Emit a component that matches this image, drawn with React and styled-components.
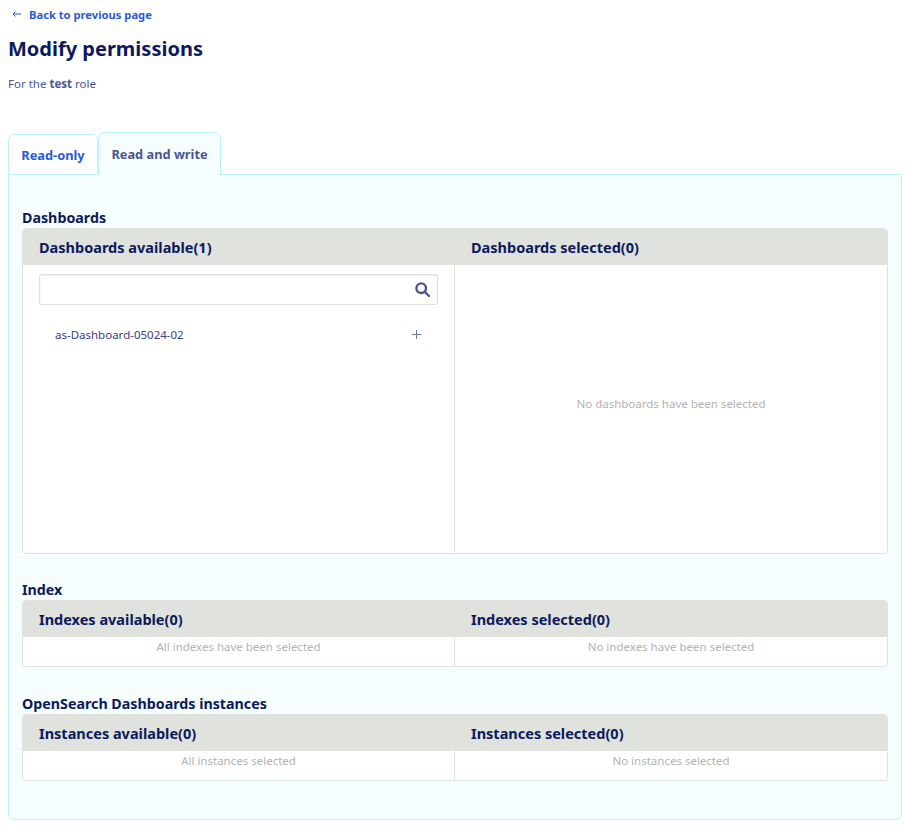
import React from 'react';
import styled, { createGlobalStyle } from 'styled-components';

const GlobalStyle = createGlobalStyle`
  html, body { margin: 0; padding: 0; background: #fff; }
  body { font-family: 'Noto Sans', 'Open Sans', sans-serif; color: #4d5592; }
`;

const Page = styled.div`
  width: 911px;
  height: 828px;
  box-sizing: border-box;
  padding: 6px 9px 0 8px;
  overflow: hidden;
`;

const BackLink = styled.a`
  display: flex;
  align-items: center;
  gap: 7px;
  height: 16px;
  padding-left: 4px;
  font-size: 11.2px;
  font-weight: 700;
  color: #2a5bd7;
  svg { width: 10px; height: 10px; }
`;

const Title = styled.h1`
  margin: 11px 0 0;
  height: 32px;
  line-height: 32px;
  font-size: 20px;
  font-weight: 700;
  color: #0c1a5c;
`;

const Subtitle = styled.p`
  margin: 10px 0 0;
  height: 18px;
  line-height: 18px;
  font-size: 11.5px;
  color: #4d5592;
  b { font-weight: 700; }
`;

const TabBar = styled.div`
  display: flex;
  align-items: flex-end;
  margin-top: 39px;
  height: 43px;
  margin-bottom: -1px;
  position: relative;
`;

const Tab = styled.div`
  display: flex;
  align-items: center;
  justify-content: center;
  box-sizing: border-box;
  width: ${p => p.$width}px;
  height: ${p => (p.$active ? 43 : 41)}px;
  padding-bottom: ${p => (p.$active ? 1 : 0)}px;
  font-size: 12.8px;
  font-weight: 700;
  color: ${p => (p.$active ? '#4d5592' : '#2a5bd7')};
  background: ${p => (p.$active ? '#f5fdff' : '#fff')};
  border: 1px solid #bef1ff;
  border-bottom: ${p => (p.$active ? '0' : '1px solid #bef1ff')};
  border-radius: 6px 6px 0 0;
`;

const Panel = styled.div`
  box-sizing: border-box;
  height: 646px;
  padding: 33px 13px 0;
  background: #f5fdff;
  border: 1px solid #bef1ff;
  border-radius: 0 0 6px 6px;
`;

const Section = styled.section`
  margin-bottom: ${p => p.$gap}px;
`;

const SectionTitle = styled.h2`
  margin: 0;
  height: 20px;
  line-height: 20px;
  font-size: 14.25px;
  font-weight: 700;
  color: #0c1a5c;
`;

const Picker = styled.div`
  display: grid;
  grid-template-columns: 431px 1fr;
  background: #fff;
  border: 1px solid #e0e2de;
  border-radius: 4px;
  overflow: hidden;
`;

const ColumnHead = styled.div`
  display: flex;
  align-items: center;
  height: 36px;
  padding-left: ${p => (p.$right ? 17 : 16)}px;
  background: #e0e2de;
  font-size: 14.5px;
  font-weight: 700;
  color: #0c1a5c;
`;

const ColumnBody = styled.div`
  box-sizing: border-box;
  height: ${p => p.$height}px;
  border-left: ${p => (p.$divider ? '1px solid #e0e2de' : '0')};
`;

const Empty = styled.div`
  display: flex;
  justify-content: center;
  align-items: ${p => (p.$middle ? 'center' : 'flex-start')};
  box-sizing: border-box;
  height: 100%;
  padding-bottom: ${p => (p.$middle ? 11 : 0)}px;
  line-height: 20px;
  font-size: 11.5px;
  color: #b3b3b3;
`;

const SearchBox = styled.div`
  display: flex;
  align-items: center;
  justify-content: flex-end;
  box-sizing: border-box;
  height: 31px;
  margin: 9px 16px 0;
  padding-right: 7px;
  border: 1px solid #e0e2de;
  border-radius: 2px;
  box-shadow: inset 0 1px 2px rgba(0, 0, 0, 0.08);
  svg { width: 15px; height: 15px; }
`;

const Item = styled.div`
  display: flex;
  align-items: center;
  justify-content: space-between;
  height: 20px;
  margin: 19px 16px 0 32px;
  padding-right: 17px;
  font-size: 11.5px;
  color: #3a4280;
  svg { width: 9px; height: 9px; }
`;

const columns = [
  {
    title: 'Index',
    left: 'Indexes available(0)',
    right: 'Indexes selected(0)',
    leftEmpty: 'All indexes have been selected',
    rightEmpty: 'No indexes have been selected',
    gap: 27,
  },
  {
    title: 'OpenSearch Dashboards instances',
    left: 'Instances available(0)',
    right: 'Instances selected(0)',
    leftEmpty: 'All instances selected',
    rightEmpty: 'No instances selected',
    gap: 0,
  },
];

const App = () => {
  return (
    <Page>
      <GlobalStyle />
      <BackLink>
        <svg viewBox="0 0 10 10" fill="none" stroke="#2a5bd7" strokeWidth="1">
          <path d="M9 5H1M3.5 2.5L1 5l2.5 2.5" />
        </svg>
        Back to previous page
      </BackLink>
      <Title>Modify permissions</Title>
      <Subtitle>
        For the <b>test</b> role
      </Subtitle>
      <TabBar>
        <Tab $width={90}>Read-only</Tab>
        <Tab $width={123} $active>
          Read and write
        </Tab>
      </TabBar>
      <Panel>
        <Section $gap={26}>
          <SectionTitle>Dashboards</SectionTitle>
          <Picker>
            <ColumnHead>Dashboards available(1)</ColumnHead>
            <ColumnHead $right>Dashboards selected(0)</ColumnHead>
            <ColumnBody $height={288}>
              <SearchBox>
                <svg viewBox="0 0 15 15" fill="none" stroke="#4d5592" strokeWidth="2.4">
                  <circle cx="6.2" cy="6.2" r="4.8" />
                  <path d="M9.8 9.8L14 14" strokeLinecap="round" />
                </svg>
              </SearchBox>
              <Item>
                as-Dashboard-05024-02
                <svg viewBox="0 0 9 9" fill="none" stroke="#6b72a6" strokeWidth="1">
                  <path d="M4.5 0v9M0 4.5h9" />
                </svg>
              </Item>
            </ColumnBody>
            <ColumnBody $height={288} $divider>
              <Empty $middle>No dashboards have been selected</Empty>
            </ColumnBody>
          </Picker>
        </Section>
        {columns.map(c => (
          <Section key={c.title} $gap={c.gap}>
            <SectionTitle>{c.title}</SectionTitle>
            <Picker>
              <ColumnHead>{c.left}</ColumnHead>
              <ColumnHead $right>{c.right}</ColumnHead>
              <ColumnBody $height={29}>
                <Empty>{c.leftEmpty}</Empty>
              </ColumnBody>
              <ColumnBody $height={29} $divider>
                <Empty>{c.rightEmpty}</Empty>
              </ColumnBody>
            </Picker>
          </Section>
        ))}
      </Panel>
    </Page>
  );
};

export default App;
